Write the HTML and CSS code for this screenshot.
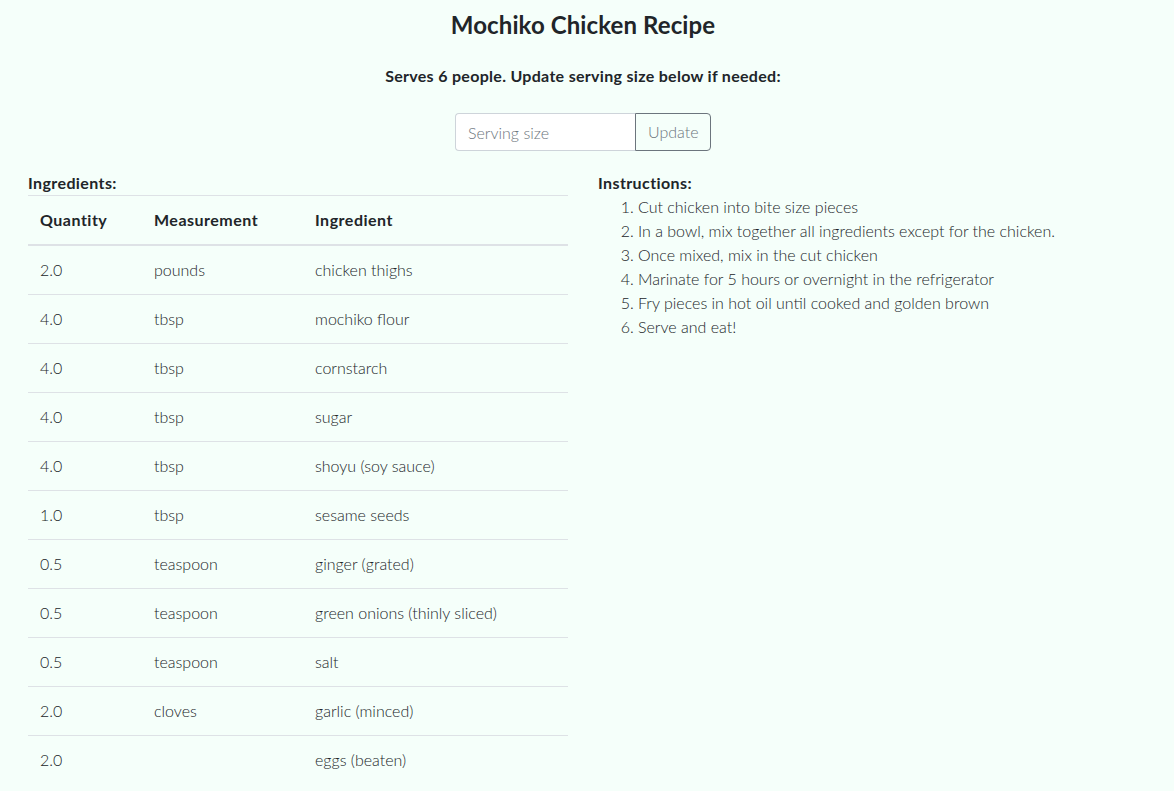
FILE: index.html
```html
<!DOCTYPE html>
<html lang="en">
<head>
<meta charset="utf-8">
<title>Mochiko Chicken Recipe</title>
<link rel="stylesheet" href="styles.css">
</head>
<body>
<div class="page">
  <h1 class="title">Mochiko Chicken Recipe</h1>
  <p class="serves">Serves 6 people. Update serving size below if needed:</p>
  <form class="serving-form">
    <input class="serving-input" type="text" placeholder="Serving size">
    <button class="serving-btn" type="button">Update</button>
  </form>
  <div class="columns">
    <section class="col">
      <h2 class="section-label">Ingredients:</h2>
      <table class="ing-table">
        <thead>
          <tr><th class="c-qty">Quantity</th><th class="c-meas">Measurement</th><th>Ingredient</th></tr>
        </thead>
        <tbody>
          <tr><td>2.0</td><td>pounds</td><td>chicken thighs</td></tr>
          <tr><td>4.0</td><td>tbsp</td><td>mochiko flour</td></tr>
          <tr><td>4.0</td><td>tbsp</td><td>cornstarch</td></tr>
          <tr><td>4.0</td><td>tbsp</td><td>sugar</td></tr>
          <tr><td>4.0</td><td>tbsp</td><td>shoyu (soy sauce)</td></tr>
          <tr><td>1.0</td><td>tbsp</td><td>sesame seeds</td></tr>
          <tr><td>0.5</td><td>teaspoon</td><td>ginger (grated)</td></tr>
          <tr><td>0.5</td><td>teaspoon</td><td>green onions (thinly sliced)</td></tr>
          <tr><td>0.5</td><td>teaspoon</td><td>salt</td></tr>
          <tr><td>2.0</td><td>cloves</td><td>garlic (minced)</td></tr>
          <tr><td>2.0</td><td></td><td>eggs (beaten)</td></tr>
        </tbody>
      </table>
    </section>
    <section class="col">
      <h2 class="section-label">Instructions:</h2>
      <ol class="steps">
        <li>Cut chicken into bite size pieces</li>
        <li>In a bowl, mix together all ingredients except for the chicken.</li>
        <li>Once mixed, mix in the cut chicken</li>
        <li>Marinate for 5 hours or overnight in the refrigerator</li>
        <li>Fry pieces in hot oil until cooked and golden brown</li>
        <li>Serve and eat!</li>
      </ol>
    </section>
  </div>
</div>
</body>
</html>
```

FILE: styles.css
```css
html, body {
  margin: 0;
  padding: 0;
  background: #f5fffa;
}
body {
  font-family: "Lato", "Open Sans", sans-serif;
  font-size: 16px;
  line-height: 24px;
  color: #212529;
  font-weight: 300;
}
.page {
  width: 1110px;
  padding: 0 0 0 28px;
}
.title {
  margin: 8px 0 0;
  text-align: center;
  font-size: 24px;
  line-height: 34px;
  font-weight: 700;
  letter-spacing: 0.1px;
}
.serves {
  margin: 22px 0 0;
  text-align: center;
  font-weight: 700;
  line-height: 24px;
  letter-spacing: 0.3px;
}
.serving-form {
  margin: 25px 0 0;
  display: flex;
  justify-content: center;
}
.serving-input {
  box-sizing: border-box;
  width: 180px;
  height: 38px;
  margin: 0;
  padding: 6px 12px;
  font: inherit;
  font-weight: 300;
  color: #495057;
  background: #fff;
  border: 1px solid #ced4da;
  border-right: none;
  border-radius: 4px 0 0 4px;
  outline: none;
}
.serving-input::placeholder {
  color: #6c757d;
}
.serving-btn {
  box-sizing: border-box;
  width: 76px;
  height: 38px;
  padding: 6px 12px;
  font: inherit;
  font-weight: 300;
  color: #6c757d;
  background: transparent;
  border: 1px solid #6c757d;
  border-radius: 0 4px 4px 0;
}
.columns {
  margin-top: 20px;
  display: grid;
  grid-template-columns: 540px 540px;
  column-gap: 30px;
}
.section-label {
  margin: 0;
  font-size: 16px;
  line-height: 24px;
  font-weight: 700;
  letter-spacing: 0.4px;
}
.ing-table {
  width: 540px;
  border-collapse: collapse;
}
.ing-table th,
.ing-table td {
  padding: 12px;
  text-align: left;
  vertical-align: top;
  border-top: 1px solid #dee2e6;
}
.ing-table th {
  font-weight: 700;
  letter-spacing: 0.5px;
  border-bottom: 2px solid #dee2e6;
}
.c-qty { width: 90px; }
.c-meas { width: 137px; }
.steps {
  margin: 0;
  padding-left: 40px;
}
```
